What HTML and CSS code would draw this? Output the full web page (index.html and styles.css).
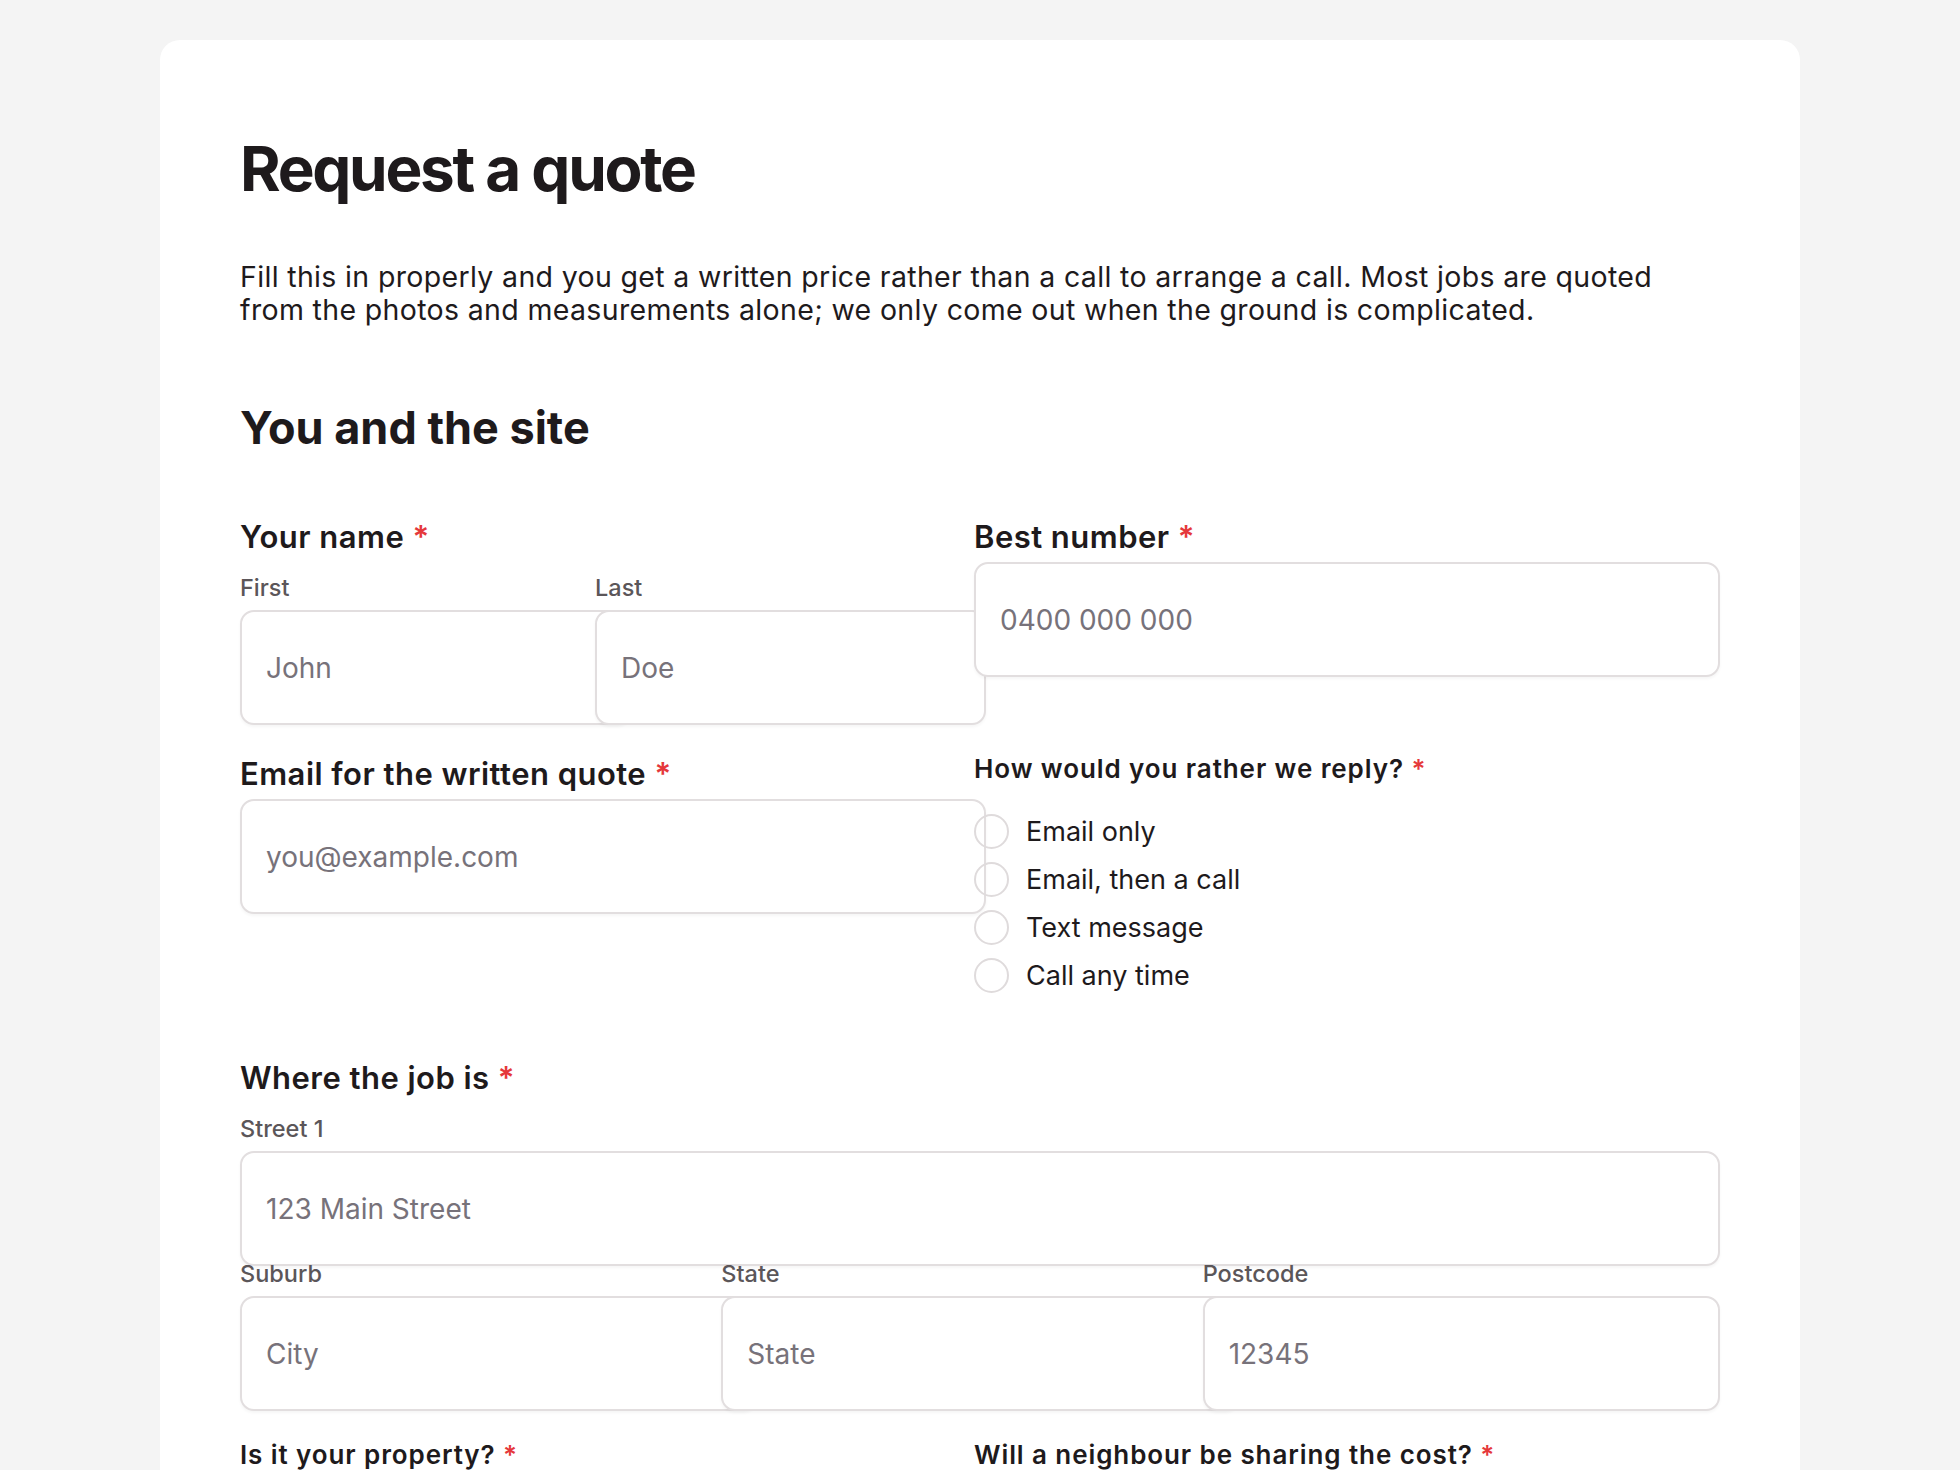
FILE: index.html
```html
<!DOCTYPE html>
<html lang="en">
<head>
<meta charset="utf-8">
<title>Request a quote</title>
<link rel="stylesheet" href="styles.css">
</head>
<body>
<main class="card">
  <form class="form">
    <h1 class="title">Request a quote</h1>
    <p class="intro">Fill this in properly and you get a written price rather than a call to arrange a call. Most jobs are quoted from the photos and measurements alone; we only come out when the ground is complicated.</p>

    <h2 class="section-title">You and the site</h2>

    <div class="row row-first">
      <div class="field">
        <div class="label">Your name <span class="req">*</span></div>
        <div class="split split-2">
          <div class="sub">
            <label class="sublabel" for="first">First</label>
            <input class="input" id="first" type="text" placeholder="John">
          </div>
          <div class="sub">
            <label class="sublabel" for="last">Last</label>
            <input class="input" id="last" type="text" placeholder="Doe">
          </div>
        </div>
      </div>
      <div class="field">
        <label class="label" for="phone">Best number <span class="req">*</span></label>
        <input class="input input-top" id="phone" type="tel" placeholder="0400 000 000">
      </div>
    </div>

    <div class="row">
      <div class="field">
        <label class="label" for="email">Email for the written quote <span class="req">*</span></label>
        <input class="input input-top" id="email" type="email" placeholder="you@example.com">
      </div>
      <fieldset class="group">
        <legend class="legend">How would you rather we reply? <span class="req">*</span></legend>
        <div class="options">
          <label class="option"><input class="radio" type="radio" name="reply"> Email only</label>
          <label class="option"><input class="radio" type="radio" name="reply"> Email, then a call</label>
          <label class="option"><input class="radio" type="radio" name="reply"> Text message</label>
          <label class="option"><input class="radio" type="radio" name="reply"> Call any time</label>
        </div>
      </fieldset>
    </div>

    <div class="address">
      <div class="label">Where the job is <span class="req">*</span></div>
      <div class="sub sub-street">
        <label class="sublabel" for="street">Street 1</label>
        <input class="input" id="street" type="text" placeholder="123 Main Street">
      </div>
      <div class="split split-3">
        <div class="sub">
          <label class="sublabel" for="suburb">Suburb</label>
          <input class="input" id="suburb" type="text" placeholder="City">
        </div>
        <div class="sub">
          <label class="sublabel" for="state">State</label>
          <input class="input" id="state" type="text" placeholder="State">
        </div>
        <div class="sub">
          <label class="sublabel" for="postcode">Postcode</label>
          <input class="input" id="postcode" type="text" placeholder="12345">
        </div>
      </div>
    </div>

    <div class="row">
      <fieldset class="group">
        <legend class="legend">Is it your property? <span class="req">*</span></legend>
        <div class="options">
          <label class="option"><input class="radio" type="radio" name="own"> Yes, I own it</label>
          <label class="option"><input class="radio" type="radio" name="own"> No, I rent it</label>
          <label class="option"><input class="radio" type="radio" name="own"> I manage it for the owner</label>
        </div>
      </fieldset>
      <fieldset class="group">
        <legend class="legend">Will a neighbour be sharing the cost? <span class="req">*</span></legend>
        <div class="options">
          <label class="option"><input class="radio" type="radio" name="share"> Yes</label>
          <label class="option"><input class="radio" type="radio" name="share"> No</label>
          <label class="option"><input class="radio" type="radio" name="share"> Not sure yet</label>
        </div>
      </fieldset>
    </div>
  </form>
</main>
</body>
</html>
```

FILE: styles.css
```css
* {
  box-sizing: border-box;
}

html,
body {
  margin: 0;
}

html {
  overflow: hidden;
}

body {
  background: #f4f4f4;
  font-family: Inter, "Noto Sans", sans-serif;
  color: #1e1a1c;
  padding-top: 40px;
}

.card {
  width: 1640px;
  margin: 0 auto;
  background: #ffffff;
  border-radius: 20px 20px 0 0;
  padding: 80px 80px 120px;
}

.form {
  width: 1428px;
}

.title {
  font-size: 62px;
  line-height: 74px;
  font-weight: 700;
  letter-spacing: -0.037em;
  margin: 12px 0 0;
}

.intro {
  font-size: 28.5px;
  line-height: 33px;
  letter-spacing: 0.012em;
  margin: 54px 0 0;
}

.section-title {
  font-size: 45px;
  line-height: 54px;
  font-weight: 700;
  margin: 75px 0 0;
}

.row {
  display: grid;
  grid-template-columns: 1fr 1fr;
  column-gap: 40px;
  margin-top: 29px;
}

.row-first {
  margin-top: 62px;
}

.field {
  min-width: 0;
}

.label {
  display: block;
  font-size: 31px;
  line-height: 40px;
  font-weight: 600;
  letter-spacing: 0.015em;
}

.req {
  color: #e5383b;
}

.split {
  display: grid;
  column-gap: 16px;
}

.split-2 {
  grid-template-columns: 1fr 1fr;
  margin-top: 16px;
}

.split-3 {
  grid-template-columns: 1fr 1fr 1fr;
  margin-top: -7px;
}

.sub-street {
  margin-top: 16px;
}

.sublabel {
  display: block;
  font-size: 23.5px;
  line-height: 30px;
  font-weight: 500;
  color: #5b5659;
}

.input {
  box-sizing: content-box;
  display: block;
  width: 100%;
  height: 111px;
  padding: 0 24px;
  margin: 7px 0 0;
  border: 2px solid #e2dedf;
  border-radius: 14px;
  background: #ffffff;
  box-shadow: 0 2px 3px rgba(0, 0, 0, 0.04);
  font-family: Inter, "Noto Sans", sans-serif;
  font-size: 28px;
  font-weight: 400;
  color: #1e1a1c;
  outline: none;
}

.input-top {
  margin-top: 5px;
}

.input::placeholder {
  color: #77727a;
  opacity: 1;
}

.group {
  border: 0;
  margin: 0;
  padding: 0;
  min-width: 0;
}

.legend {
  padding: 0;
  font-size: 26px;
  line-height: 30px;
  font-weight: 600;
  letter-spacing: 0.035em;
}

.options {
  display: flex;
  flex-direction: column;
  gap: 13px;
  margin-top: 30px;
}

.option {
  display: flex;
  align-items: center;
  gap: 17px;
  font-size: 27px;
  line-height: 35px;
}

.radio {
  appearance: none;
  -webkit-appearance: none;
  flex: none;
  width: 35px;
  height: 35px;
  margin: 0;
  border: 2px solid #dfdbdc;
  border-radius: 50%;
  background: transparent;
}

.address {
  margin-top: 65px;
}
```
